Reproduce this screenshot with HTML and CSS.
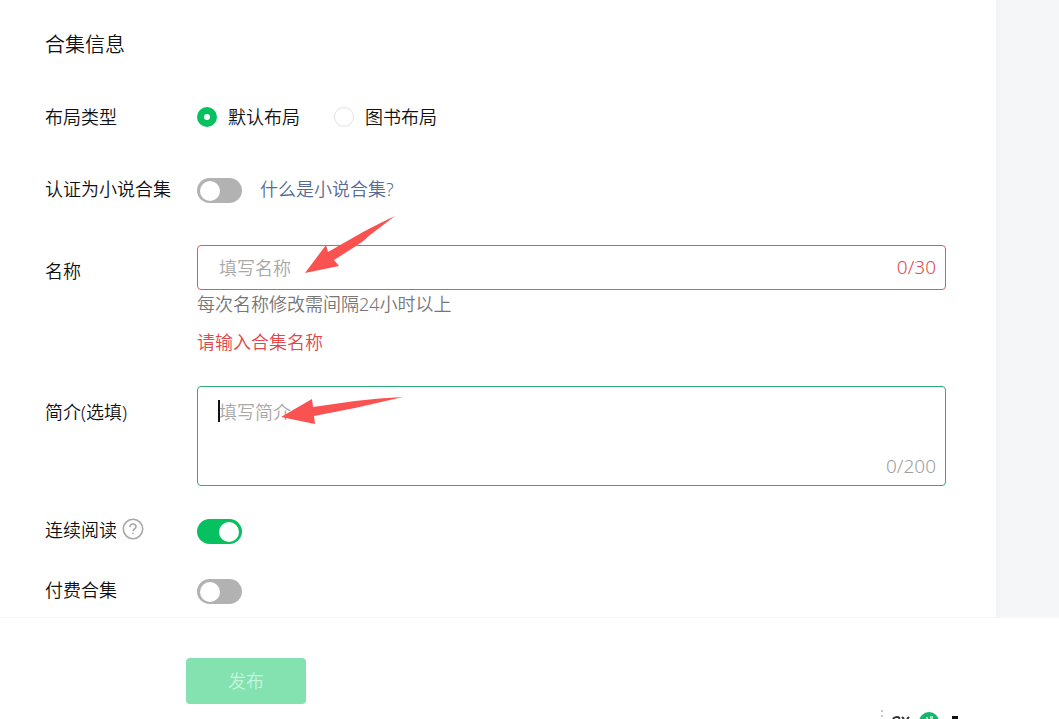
FILE: index.html
```html
<!DOCTYPE html>
<html lang="zh-CN">
<head>
  <meta charset="UTF-8">
  <meta name="viewport" content="width=device-width, initial-scale=1.0">
  <title>合集信息</title>
  <link rel="stylesheet" href="styles.css">
</head>
<body>
  <div class="page">
    <main class="panel">
      <h1>合集信息</h1>

      <form id="albumForm">
        <div class="row" role="radiogroup" aria-labelledby="layoutLabel">
          <span class="label" id="layoutLabel">布局类型</span>
          <div class="field inline">
            <label class="radio"><input type="radio" name="layout" checked>默认布局</label>
            <label class="radio"><input type="radio" name="layout">图书布局</label>
          </div>
        </div>

        <div class="row">
          <label class="label" for="novel">认证为小说合集</label>
          <div class="field inline">
            <input type="checkbox" class="switch" id="novel">
            <a href="#">什么是小说合集?</a>
          </div>
        </div>

        <div class="row tall">
          <label class="label" for="name">名称</label>
          <div class="field">
            <div class="box">
              <input type="text" class="input error" id="name" placeholder="填写名称">
              <span class="count red">0/30</span>
              <svg class="arrow arrow-name" viewBox="0 0 92 60" width="92" height="60" aria-hidden="true">
                <path d="M91 1 Q78 7 59 17 L24 37 L22 30 L1 58 L35 51 L30 45 L52 31 Q60 26 66 20 Z"/>
              </svg>
            </div>
            <p class="hint">每次名称修改需间隔24小时以上</p>
            <p class="message">请输入合集名称</p>
          </div>
        </div>

        <div class="row tall">
          <label class="label" for="intro">简介(选填)</label>
          <div class="field">
            <div class="box">
              <textarea class="input active" id="intro" placeholder="填写简介"></textarea>
              <span class="caret"></span>
              <span class="count">0/200</span>
              <svg class="arrow arrow-intro" viewBox="0 0 124 30" width="124" height="30" aria-hidden="true">
                <path d="M123 1 Q100 2 75 5 L33 11 L32 3 L1 21 L35 28 L34 20 L75 12 Z"/>
              </svg>
            </div>
          </div>
        </div>

        <div class="row">
          <label class="label" for="reading">连续阅读
            <svg class="help" viewBox="0 0 22 22" width="22" height="22" aria-hidden="true">
              <circle cx="11" cy="11" r="9.7"/>
              <path d="M8 8.9 C8 5 14 5 14 8.7 C14 10.8 11 11 11 13.3"/>
              <path d="M11 14.8 V16.3"/>
            </svg>
          </label>
          <div class="field inline">
            <input type="checkbox" class="switch" id="reading" checked>
          </div>
        </div>

        <div class="row">
          <label class="label" for="paid">付费合集</label>
          <div class="field inline">
            <input type="checkbox" class="switch" id="paid">
          </div>
        </div>
      </form>
    </main>
    <div class="side"></div>
  </div>

  <footer class="footer">
    <button class="btn" type="submit" form="albumForm" disabled>发布</button>
  </footer>

  <!-- Floating toolbar, cut off by the window edge -->
  <div class="toolbar">
    <svg viewBox="0 0 80 10" width="80" height="10" aria-hidden="true">
      <path fill="#c4c4c4" d="M1 1h2v2h-2z M1 6h2v2h-2z"/>
      <path fill="none" stroke="#333" stroke-width="2" d="M13 10 Q14 8 17 8 Q20 8 19 10 M22 8 L24 10 M29 8 L27 10"/>
      <circle cx="49" cy="13" r="10" fill="#12b76a"/>
      <path fill="#a5e8c5" d="M46 8h2v2h-2z M50 7h3v3h-3z"/>
      <path fill="#111" d="M72 7h6v3h-6z"/>
    </svg>
  </div>
</body>
</html>
```

FILE: styles.css
```css
/* General Reset */
* { margin: 0; padding: 0; box-sizing: border-box; }

body {
  font-family: "Noto Sans", "Noto Sans CJK SC", sans-serif;
  font-size: 18px;
  font-weight: 350;
  line-height: 28px;
  color: #111;
  background: #fff;
  display: flex;
  flex-direction: column;
  height: 100vh;
  overflow: hidden;
  position: relative;
}

input, textarea, button {
  font: inherit;
}

.page {
  display: flex;
  flex: 1;
  min-height: 0;
}

.panel {
  flex: 1;
  padding: 31px 50px 0 45px;
  overflow: hidden;
}

.side {
  width: 63px;
  background: #f5f6f8;
  border-left: 4px solid #f3f4f5;
}

h1 {
  font-size: 20px;
  font-weight: 350;
  margin-bottom: 44px;
}

/* Form rows */
.row {
  display: flex;
  margin-bottom: 44px;
}

.row.tall {
  margin-top: -2px;
  margin-bottom: 30px;
}

.row.tall + .row {
  margin-bottom: 32px;
}

.row.tall + .row.tall {
  margin-top: 0;
  margin-bottom: 30px;
}

.label {
  flex: none;
  width: 152px;
}

.tall .label {
  padding-top: 12px;
}

.field {
  flex: 1;
  min-width: 0;
}

.inline {
  display: flex;
  align-items: center;
}

.radio {
  display: flex;
  align-items: center;
  gap: 11px;
  margin-right: 34px;
}

.radio input {
  appearance: none;
  width: 20px;
  height: 20px;
  border: 1px solid #e2e2e2;
  border-radius: 50%;
  background: #fff;
}

.radio input:checked {
  border: 7px solid #07c160;
}

/* Switch */
.switch {
  appearance: none;
  width: 45px;
  height: 25px;
  margin: 3px 18px 0 0;
  padding: 3px;
  border-radius: 13px;
  background: #b2b2b2;
  display: flex;
  align-items: center;
}

.switch::before {
  content: "";
  width: 20px;
  height: 20px;
  border-radius: 50%;
  background: #fff;
}

.switch:checked {
  background: #07c160;
  justify-content: flex-end;
}

a {
  color: #576b95;
  text-decoration: none;
}

/* Text fields */
.box {
  position: relative;
}

.input {
  display: block;
  width: 100%;
  height: 45px;
  padding: 8px 80px 8px 21px;
  border: 1px solid #b2b2b2;
  border-radius: 4px;
  background: #fff;
  color: #111;
  outline: none;
  resize: none;
}

.input::placeholder {
  color: #a8a8a8;
}

.input.error {
  border-color: #d95c5f;
}

.input.active {
  height: 100px;
  padding-top: 11px;
  border-color: #2aae73;
}

.count {
  position: absolute;
  right: 10px;
  bottom: 6px;
  font-size: 19px;
  color: #a0a0a0;
}

.red, .message {
  color: #e1484c;
}

.count.red {
  bottom: 9px;
}

.hint {
  color: #777;
}

.message {
  margin-top: 10px;
}

.caret {
  position: absolute;
  left: 21px;
  top: 14px;
  width: 2px;
  height: 22px;
  background: #111;
}

.arrow {
  position: absolute;
  fill: #fa5151;
  pointer-events: none;
}

.arrow-name {
  left: 107px;
  top: -30px;
}

.arrow-intro {
  left: 83px;
  top: 10px;
}

.help {
  vertical-align: -3px;
  fill: none;
  stroke: #a8a8a8;
  stroke-width: 1.6;
}

/* Footer */
.footer {
  padding: 40px 186px 15px;
  border-top: 1px solid #f7f7f7;
  background: #fff;
}

.btn {
  display: block;
  width: 120px;
  height: 46px;
  border: none;
  border-radius: 4px;
  background: #83e2b0;
  color: #c6f3dc;
}

.toolbar {
  position: absolute;
  left: 880px;
  bottom: 0;
  display: flex;
}
```
